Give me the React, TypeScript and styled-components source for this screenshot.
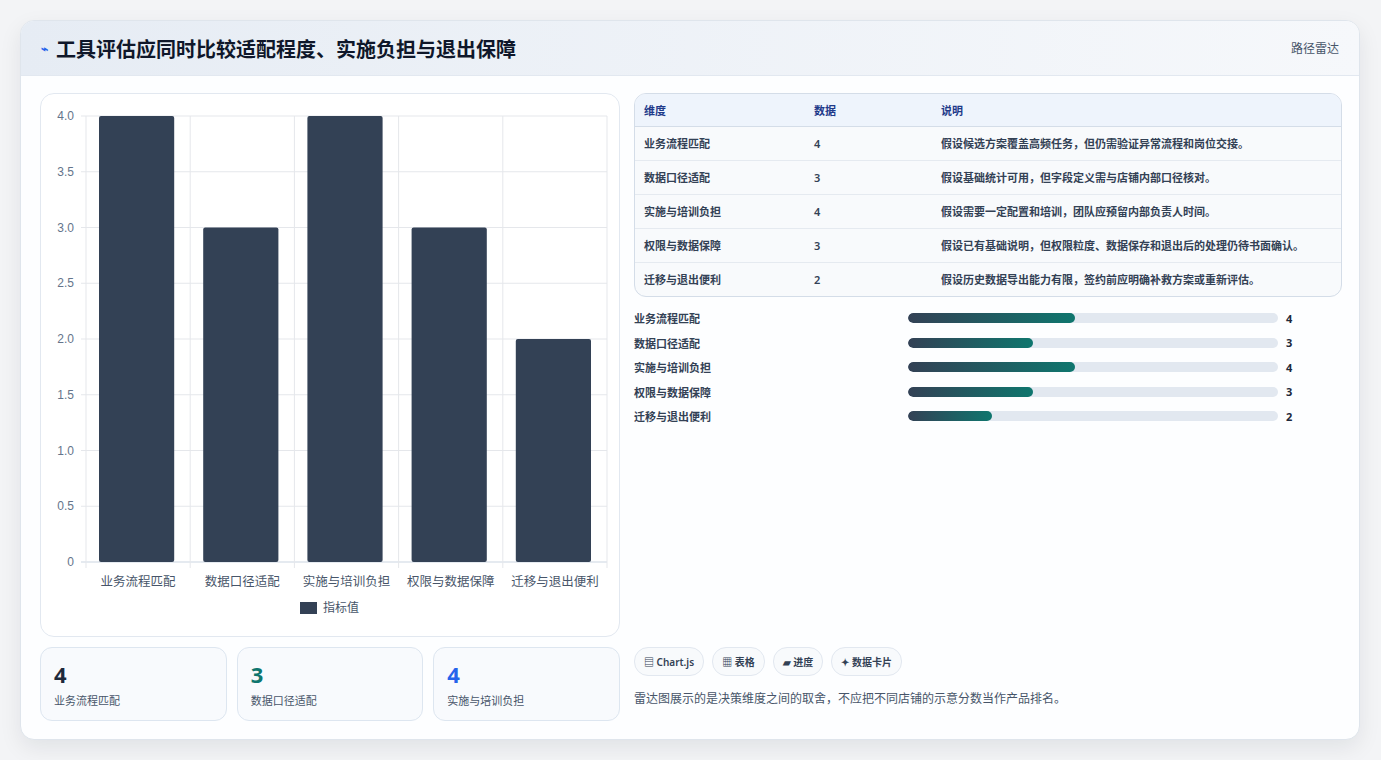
import React from "react";
import styled, { createGlobalStyle } from "styled-components";

const G = createGlobalStyle`
  body{margin:0;background:#f3f4f6;font-family:"Noto Sans","Noto Sans CJK SC",sans-serif;color:#334155;}
`;
const Page = styled.div`padding:20px 20px 20px 20px;width:1381px;box-sizing:border-box;`;
const Card = styled.div`width:1340px;height:720px;background:#fdfeff;border:1px solid #dfe5ec;border-radius:14px;box-shadow:0 8px 22px rgba(15,23,42,.08);overflow:hidden;display:flex;flex-direction:column;box-sizing:border-box;`;
const Header = styled.div`height:55px;flex:none;display:flex;align-items:center;justify-content:space-between;padding:0 20px;background:linear-gradient(90deg,#e6ecf4,#f6f8fb);border-bottom:1px solid #e2e8f0;box-sizing:border-box;`;
const Title = styled.h1`margin:0;font-size:20px;font-weight:700;color:#0f172a;display:flex;align-items:center;gap:8px;`;
const Icon = styled.span`color:#2563eb;font-size:12px;`;
const Tag = styled.span`font-size:12px;color:#475569;`;
const Body = styled.div`display:grid;grid-template-columns:580px 708px;gap:14px;padding:17px 19px 0 19px;`;
const Col = styled.div`display:flex;flex-direction:column;`;
const ChartCard = styled.div`height:544px;border:1px solid #e2e8f0;border-radius:14px;background:#fff;box-sizing:border-box;`;
const Stats = styled.div`display:grid;grid-template-columns:repeat(3,1fr);gap:10px;margin-top:10px;`;
const Stat = styled.div`height:74px;border:1px solid #dde6f0;border-radius:12px;background:#f8fafd;padding:12px 13px;box-sizing:border-box;`;
const StatNum = styled.div<{c:string}>`font-size:22px;font-weight:700;color:${p=>p.c};line-height:28px;`;
const StatLbl = styled.div`font-size:11px;color:#475569;margin-top:4px;`;
const Table = styled.table`width:100%;border-collapse:separate;border-spacing:0;border:1px solid #d4dde8;border-radius:12px;overflow:hidden;font-size:11px;font-weight:600;background:#f8fafc;`;
const Th = styled.th`text-align:left;background:#eef4fc;color:#1e3a8a;height:32px;padding:0 9px;border-bottom:1px solid #d4dde8;font-weight:600;`;
const Td = styled.td`padding:8px 9px;border-bottom:1px solid #e5eaf0;line-height:17px;vertical-align:top;color:#334155;`;
const Bars = styled.div`display:flex;flex-direction:column;gap:6px;margin-top:12px;`;
const BarRow = styled.div`display:grid;grid-template-columns:266px 370px auto;gap:8px;align-items:center;font-size:11px;font-weight:600;height:18.5px;`;
const Track = styled.div`height:10px;border-radius:5px;background:#e2e8f0;overflow:hidden;`;
const Fill = styled.div`height:100%;border-radius:5px;background:linear-gradient(90deg,#334155,#0f766e);`;
const Val = styled.span`color:#1e293b;font-weight:700;`;
const Chips = styled.div`display:flex;gap:8px;margin-top:auto;`;
const Chip = styled.span`height:27px;padding:0 9px;display:flex;align-items:center;border:1px solid #e2e8f0;border-radius:14px;background:#f8fafc;font-size:10px;font-weight:600;color:#334155;`;
const Caption = styled.div`font-size:12px;color:#475569;margin:13px 0 14px;`;

const rows = [
  ["业务流程匹配", 4, "假设候选方案覆盖高频任务，但仍需验证异常流程和岗位交接。"],
  ["数据口径适配", 3, "假设基础统计可用，但字段定义需与店铺内部口径核对。"],
  ["实施与培训负担", 4, "假设需要一定配置和培训，团队应预留内部负责人时间。"],
  ["权限与数据保障", 3, "假设已有基础说明，但权限粒度、数据保存和退出后的处理仍待书面确认。"],
  ["迁移与退出便利", 2, "假设历史数据导出能力有限，签约前应明确补救方案或重新评估。"],
] as const;

function Chart(){
  const L=45,R=566,T=22,B=468,w=(R-L)/5;
  const ticks=[0,0.5,1,1.5,2,2.5,3,3.5,4];
  const y=(v:number)=>B-(v/4)*(B-T);
  return (
    <svg width="578" height="542" style={{display:"block"}} fontFamily='"Noto Sans CJK SC",sans-serif'>
      {ticks.map(t=>(
        <g key={t}>
          <line x1={L-5} x2={R} y1={y(t)} y2={y(t)} stroke={t===0?"#cbd5e1":"#e5e7eb"}/>
          <text x={L-12} y={y(t)+4} textAnchor="end" fontSize="12" fill="#64748b" fontFamily="Liberation Sans,sans-serif">{t===0?"0":t.toFixed(1)}</text>
        </g>
      ))}
      {[0,1,2,3,4,5].map(i=><line key={i} x1={L+i*w} x2={L+i*w} y1={T} y2={B+6} stroke="#e5e7eb"/>)}
      {rows.map((r,i)=>(
        <g key={i}>
          <rect x={L+i*w+13} y={y(r[1])} width={w-29} height={B-y(r[1])} rx="2" fill="#334155"/>
          <text x={L+i*w+w/2} y={492} textAnchor="middle" fontSize="12.5" fill="#475569">{r[0]}</text>
        </g>
      ))}
      <rect x={259} y={508} width={17} height={12} fill="#334155"/>
      <text x={282} y={518} fontSize="12" fill="#475569">指标值</text>
    </svg>
  );
}

export default function App(){
  return (<Page><G/>
    <Card>
      <Header><Title><Icon>⌁</Icon>工具评估应同时比较适配程度、实施负担与退出保障</Title><Tag>路径雷达</Tag></Header>
      <Body>
        <Col>
          <ChartCard><Chart/></ChartCard>
          <Stats>
            <Stat><StatNum c="#1e293b">4</StatNum><StatLbl>业务流程匹配</StatLbl></Stat>
            <Stat><StatNum c="#0f766e">3</StatNum><StatLbl>数据口径适配</StatLbl></Stat>
            <Stat><StatNum c="#2563eb">4</StatNum><StatLbl>实施与培训负担</StatLbl></Stat>
          </Stats>
        </Col>
        <Col>
          <Table>
            <thead><tr><Th style={{width:152}}>维度</Th><Th style={{width:109}}>数据</Th><Th>说明</Th></tr></thead>
            <tbody>{rows.map((r,i)=>(
              <tr key={i}><Td style={i===4?{borderBottom:0}:undefined}>{r[0]}</Td><Td style={i===4?{borderBottom:0}:undefined}>{r[1]}</Td><Td style={i===4?{borderBottom:0,paddingRight:24}:{paddingRight:24}}>{r[2]}</Td></tr>
            ))}</tbody>
          </Table>
          <Bars>{rows.map((r,i)=>(
            <BarRow key={i}><span>{r[0]}</span><Track><Fill style={{width:`${r[1]*11.3}%`}}/></Track><Val>{r[1]}</Val></BarRow>
          ))}</Bars>
          <Chips><Chip>▤ Chart.js</Chip><Chip>▦ 表格</Chip><Chip>▰ 进度</Chip><Chip>✦ 数据卡片</Chip></Chips>
          <Caption>雷达图展示的是决策维度之间的取舍，不应把不同店铺的示意分数当作产品排名。</Caption>
        </Col>
      </Body>
    </Card>
  </Page>);
}
